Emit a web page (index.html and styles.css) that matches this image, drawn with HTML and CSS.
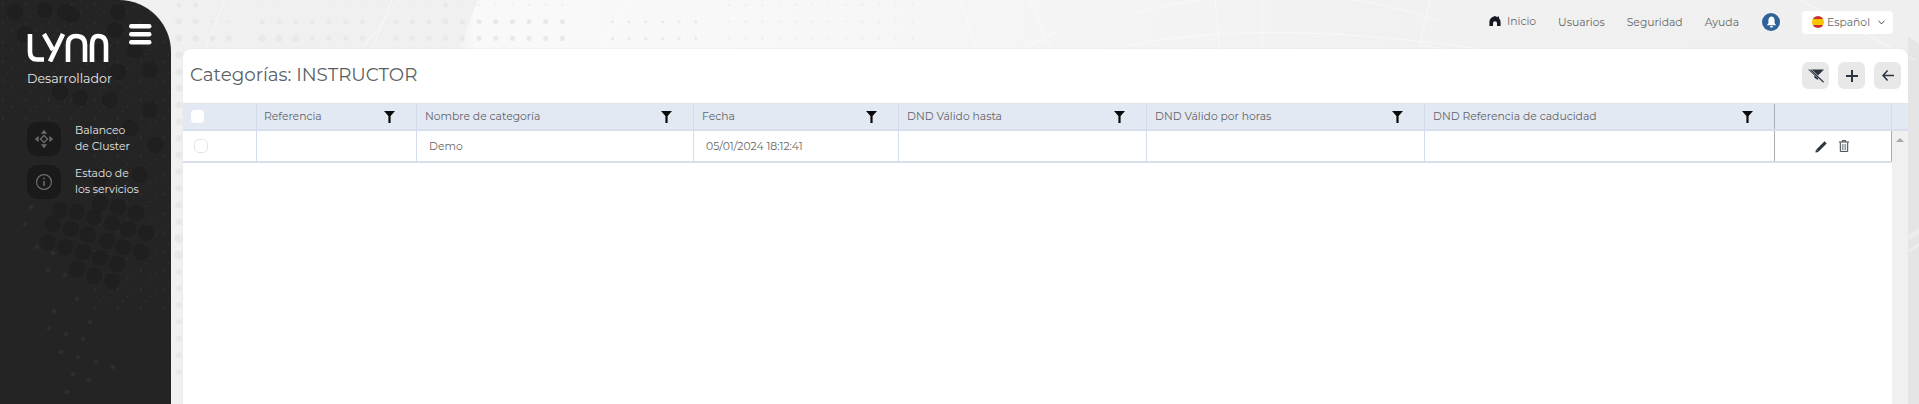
FILE: index.html
```html
<!DOCTYPE html>
<html lang="es">
<head>
<meta charset="utf-8">
<title>Categorías: INSTRUCTOR</title>
<link rel="stylesheet" href="styles.css">
</head>
<body>
<div class="app">
  <svg class="decor" width="1919" height="404" viewBox="0 0 1919 404" aria-hidden="true">
    <defs>
      <pattern id="d10" x="170.67" y="-3.33" width="16.67" height="16.67" patternUnits="userSpaceOnUse"><circle class="dot" cx="8.33" cy="8.33" r="1"/></pattern>
      <pattern id="d15" x="170.67" y="-3.33" width="16.67" height="16.67" patternUnits="userSpaceOnUse"><circle class="dot" cx="8.33" cy="8.33" r="1.5"/></pattern>
      <pattern id="d25" x="170.67" y="-3.33" width="16.67" height="16.67" patternUnits="userSpaceOnUse"><circle class="dot" cx="8.33" cy="8.33" r="2.5"/></pattern>
      <pattern id="d30" x="170.67" y="-3.33" width="16.67" height="16.67" patternUnits="userSpaceOnUse"><circle class="dot" cx="8.33" cy="8.33" r="3"/></pattern>
      <pattern id="d35" x="170.67" y="-3.33" width="16.67" height="16.67" patternUnits="userSpaceOnUse"><circle class="dot" cx="8.33" cy="8.33" r="3.5"/></pattern>
      <pattern id="d45" x="170.67" y="-3.33" width="16.67" height="16.67" patternUnits="userSpaceOnUse"><circle class="dot" cx="8.33" cy="8.33" r="4.5"/></pattern>
    </defs>
    <polygon class="facet-dark" points="171,0 478,0 458,49 171,49"/>
    <polygon class="facet-strip" points="1908,36 1919,44 1919,404 1908,404"/>
    <polygon class="facet-light" points="1908,235 1919,228 1919,234 1908,241"/>
    <polygon class="facet-light" points="1908,250 1919,243 1919,246 1908,253"/>
    <g class="lines">
      <path d="M225 0L205 49M392 0L372 49M400 0L362 49M630 0L600 49M760 0L690 49"/>
      <path d="M960 0L985 72M1030 0L1060 72M1060 30L980 72M1130 14Q1300 -30 1440 22M1125 46Q1300 10 1600 70M1130 70Q1300 45 1480 72"/>
      <path d="M1215 0L1222 72M1262 0V72M1430 0L1420 45L1580 72M1800 0L1915 60"/>
    </g>
    <g>
      <rect fill="url(#d25)" x="171" y="0" width="33" height="13"/>
      <rect fill="url(#d10)" x="255" y="0" width="185" height="13"/>
      <rect fill="url(#d25)" x="440" y="0" width="15" height="13"/>
      <rect fill="url(#d10)" x="455" y="0" width="115" height="13"/>
      <rect fill="url(#d10)" x="725" y="0" width="200" height="13"/>
      <rect fill="url(#d30)" x="171" y="13" width="33" height="17"/>
      <rect fill="url(#d15)" x="204" y="13" width="34" height="17"/>
      <rect fill="url(#d25)" x="255" y="13" width="115" height="17"/>
      <rect fill="url(#d25)" x="390" y="13" width="50" height="17"/>
      <rect fill="url(#d30)" x="440" y="13" width="15" height="17"/>
      <rect fill="url(#d25)" x="455" y="13" width="115" height="17"/>
      <rect fill="url(#d15)" x="605" y="13" width="100" height="17"/>
      <rect fill="url(#d10)" x="725" y="13" width="200" height="17"/>
      <rect fill="url(#d35)" x="171" y="30" width="33" height="16"/>
      <rect fill="url(#d30)" x="204" y="30" width="34" height="16"/>
      <rect fill="url(#d35)" x="255" y="30" width="50" height="16"/>
      <rect fill="url(#d25)" x="305" y="30" width="65" height="16"/>
      <rect fill="url(#d25)" x="390" y="30" width="180" height="16"/>
      <rect fill="url(#d15)" x="605" y="30" width="100" height="16"/>
      <rect fill="url(#d10)" x="725" y="30" width="200" height="16"/>
      <rect fill="url(#d35)" x="171" y="46" width="16" height="184"/>
      <rect fill="url(#d45)" x="171" y="230" width="16" height="32"/>
      <rect fill="url(#d30)" x="171" y="262" width="16" height="118"/>
    </g>
  </svg>
  <aside class="sidebar">
    <svg class="texture" width="171" height="404" viewBox="0 0 171 404" aria-hidden="true">
      <defs>
        <pattern id="grain" width="23" height="19" patternUnits="userSpaceOnUse"><rect class="speck" x="2" y="3" width="1.5" height="3"/><rect class="speck" x="11" y="11" width="2" height="1.5"/><rect class="speck" x="18" y="6" width="1" height="2.5"/><rect class="speck" x="7" y="15" width="1.5" height="1.5"/></pattern>
      </defs>
      <rect fill="url(#grain)" x="0" y="0" width="171" height="120"/>
      <rect fill="url(#grain)" x="90" y="120" width="81" height="190"/>
      <g class="tex-circles">
        <circle cx="15" cy="12" r="8"/><circle cx="45" cy="10" r="8"/><circle cx="72" cy="15" r="8"/><circle cx="25" cy="35" r="8"/><circle cx="118" cy="12" r="8"/><circle cx="65" cy="12" r="8"/><circle cx="115" cy="30" r="8"/><circle cx="100" cy="52" r="8"/><circle cx="135" cy="50" r="8"/><circle cx="118" cy="72" r="8"/><circle cx="150" cy="70" r="8"/><circle cx="60" cy="92" r="8"/><circle cx="80" cy="98" r="8"/><circle cx="110" cy="100" r="8"/><circle cx="150" cy="110" r="8"/><circle cx="130" cy="128" r="8"/><circle cx="155" cy="145" r="8"/><circle cx="140" cy="175" r="8"/><circle cx="100" cy="178" r="8"/>
        <circle cx="60" cy="210" r="8"/><circle cx="77" cy="212" r="8"/><circle cx="94" cy="217" r="8"/><circle cx="112" cy="223" r="8"/><circle cx="53" cy="224" r="8"/><circle cx="71" cy="229" r="8"/><circle cx="88" cy="235" r="8"/><circle cx="107" cy="241" r="8"/><circle cx="123" cy="247" r="8"/><circle cx="141" cy="252" r="8"/><circle cx="48" cy="242" r="8"/><circle cx="65" cy="247" r="8"/><circle cx="83" cy="252" r="8"/><circle cx="100" cy="258" r="8"/><circle cx="117" cy="264" r="8"/><circle cx="77" cy="269" r="8"/><circle cx="94" cy="276" r="8"/><circle cx="112" cy="281" r="8"/><circle cx="100" cy="203" r="8"/><circle cx="118" cy="207" r="8"/><circle cx="136" cy="213" r="8"/><circle cx="128" cy="229" r="8"/><circle cx="146" cy="233" r="8"/>
      </g>
      <g class="tex-diamonds">
        <rect x="29" y="205" width="4" height="4" transform="rotate(30 31 207)"/><rect x="23" y="222" width="4" height="4" transform="rotate(30 25 224)"/><rect x="35" y="245" width="4" height="4" transform="rotate(30 37 247)"/><rect x="51" y="251" width="4" height="4" transform="rotate(30 53 253)"/><rect x="46" y="268" width="4" height="4" transform="rotate(30 48 270)"/><rect x="63" y="273" width="4" height="4" transform="rotate(30 65 275)"/><rect x="75" y="297" width="4" height="4" transform="rotate(30 77 299)"/><rect x="52" y="309" width="4" height="4" transform="rotate(30 54 311)"/><rect x="88" y="320" width="4" height="4" transform="rotate(30 90 322)"/><rect x="47" y="326" width="4" height="4" transform="rotate(30 49 328)"/><rect x="64" y="332" width="4" height="4" transform="rotate(30 66 334)"/><rect x="81" y="337" width="4" height="4" transform="rotate(30 83 339)"/><rect x="59" y="350" width="4" height="4" transform="rotate(30 61 352)"/><rect x="76" y="355" width="4" height="4" transform="rotate(30 78 357)"/><rect x="71" y="372" width="4" height="4" transform="rotate(30 73 374)"/><rect x="87" y="378" width="4" height="4" transform="rotate(30 89 380)"/><rect x="65" y="390" width="4" height="4" transform="rotate(30 67 392)"/><rect x="94" y="360" width="4" height="4" transform="rotate(30 96 362)"/><rect x="111" y="365" width="4" height="4" transform="rotate(30 113 367)"/>
      </g>
    </svg>
    <div class="brand">
      <svg class="logo" width="82" height="29" viewBox="0 0 82 29" aria-label="Lynn"><g fill="none" stroke="#fff" stroke-width="4.6"><path d="M3 1V19Q3 26.5 10 26.5H17"/><path d="M17 1L26 17"/><path d="M36 1L23 28.5"/><path d="M41 29V12Q41 3 49 3Q58 3 58 12V29"/><path d="M65 29V12Q65 3 71 3Q79 3 79 12V29"/></g></svg>
      <svg class="burger" width="23" height="21" viewBox="0 0 23 21"><g fill="#fff"><rect y="0" width="22.5" height="4.6" rx="2.3"/><rect y="8" width="22.5" height="4.6" rx="2.3"/><rect y="16" width="22.5" height="4.6" rx="2.3"/></g></svg>
    </div>
    <div class="role">Desarrollador</div>
    <nav class="side-nav">
      <a class="side-item">
        <span class="side-icon"><svg width="18" height="18" viewBox="0 0 18 18" fill="none" stroke="#6a6a6a" stroke-width="1.3"><rect x="6.5" y="6.5" width="5" height="5" transform="rotate(45 9 9)"/><path d="M9 0.8L7.2 3H10.8ZM9 17.2L7.2 15H10.8ZM0.8 9L3 7.2V10.8ZM17.2 9L15 7.2V10.8Z" fill="#6a6a6a"/></svg></span>
        <span class="side-label">Balanceo<br>de Cluster</span>
      </a>
      <a class="side-item">
        <span class="side-icon"><svg width="18" height="18" viewBox="0 0 18 18" fill="none" stroke="#6e6e6e" stroke-width="1.2"><circle cx="9" cy="9" r="7.4"/><path d="M9 8V13" stroke-width="1.5"/><circle cx="9" cy="5.4" r=".9" fill="#6e6e6e" stroke="none"/></svg></span>
        <span class="side-label">Estado de<br>los servicios</span>
      </a>
    </nav>
  </aside>
  <main class="main">
    <header class="topbar">
      <a class="top-link home"><svg width="12" height="10" viewBox="0 0 12 10"><path d="M6 0L8.5 1.2V.6H10V2.2Q11.6 3.6 11.6 6V10H8V7Q8 5.2 6 5.2Q4 5.2 4 7V10H.4V6Q.4 1.4 6 0Z" fill="#151a22"/></svg>Inicio</a>
      <a class="top-link">Usuarios</a>
      <a class="top-link">Seguridad</a>
      <a class="top-link">Ayuda</a>
      <span class="bell"><svg width="11" height="12" viewBox="0 0 11 12"><path d="M5.5 0.5Q8.6 .8 8.6 4.6V7.2L10.2 9.2H.8L2.4 7.2V4.6Q2.4 .8 5.5 .5Z" fill="#fff"/><rect x="4" y="10" width="3" height="1.6" rx=".8" fill="#fff"/></svg></span>
      <span class="lang"><span class="flag"></span>Español<svg class="chev" width="7" height="5" viewBox="0 0 7 5"><path d="M.5.7L3.5 4L6.5.7" fill="none" stroke="#555" stroke-width="1"/></svg></span>
    </header>
    <section class="card">
      <div class="card-head">
        <h1 class="title">Categorías: INSTRUCTOR</h1>
        <div class="actions">
          <button class="act"><svg width="16" height="14" viewBox="0 0 16 14"><path d="M0 .5H16L10 6.5V11L6.4 8.8V6.5Z" fill="#2b3440"/><path d="M2 .2L16 13.4" stroke="#e8e8e8" stroke-width="2"/><path d="M2.5 .8L15.6 13.2" stroke="#2b3440" stroke-width="1.2"/></svg></button>
          <button class="act"><svg width="12" height="12" viewBox="0 0 12 12"><path d="M6 0V12M0 6H12" stroke="#2b3440" stroke-width="2" fill="none"/></svg></button>
          <button class="act"><svg width="12" height="11" viewBox="0 0 12 11"><path d="M5.6.6L1 5.5L5.6 10.4M1 5.5H12" stroke="#2b3440" stroke-width="1.5" fill="none"/></svg></button>
        </div>
      </div>
      <div class="grid">
        <div class="row head">
          <div class="cell c0"><span class="check solid"></span></div>
          <div class="cell c1">Referencia<svg class="funnel" width="11" height="12" viewBox="0 0 11 12"><path d="M0 0H11L6.6 5V12H4.4V5Z"/></svg></div>
          <div class="cell c2">Nombre de categoría<svg class="funnel" width="11" height="12" viewBox="0 0 11 12"><path d="M0 0H11L6.6 5V12H4.4V5Z"/></svg></div>
          <div class="cell c3">Fecha<svg class="funnel" width="11" height="12" viewBox="0 0 11 12"><path d="M0 0H11L6.6 5V12H4.4V5Z"/></svg></div>
          <div class="cell c4">DND Válido hasta<svg class="funnel" width="11" height="12" viewBox="0 0 11 12"><path d="M0 0H11L6.6 5V12H4.4V5Z"/></svg></div>
          <div class="cell c5">DND Válido por horas<svg class="funnel" width="11" height="12" viewBox="0 0 11 12"><path d="M0 0H11L6.6 5V12H4.4V5Z"/></svg></div>
          <div class="cell c6">DND Referencia de caducidad<svg class="funnel" width="11" height="12" viewBox="0 0 11 12"><path d="M0 0H11L6.6 5V12H4.4V5Z"/></svg></div>
          <div class="cell c7"></div>
          <div class="cell c8"></div>
        </div>
        <div class="body">
          <div class="row data">
            <div class="cell c0"><span class="check"></span></div>
            <div class="cell c1"></div>
            <div class="cell c2 val">Demo</div>
            <div class="cell c3 val">05/01/2024 18:12:41</div>
            <div class="cell c4"></div>
            <div class="cell c5"></div>
            <div class="cell c6"></div>
            <div class="cell c7 tools">
              <svg width="13" height="13" viewBox="0 0 13 13"><path d="M2.4 10.6L10.6 2.4" stroke="#2f3640" stroke-width="3" fill="none"/><path d="M.4 12.6L1 9.4L3.6 12Z" fill="#2f3640"/></svg>
              <svg width="10" height="12" viewBox="0 0 10 12" fill="none" stroke="#3a4048" stroke-width="1"><path d="M0 2H10M3.4 2V.6H6.6V2M1.3 2.4V11.4H8.7V2.4"/><path class="trash-bars" d="M3.4 4V10M5 4V10M6.6 4V10"/></svg>
            </div>
          </div>
          <div class="scrollbar"><span class="arrow"></span></div>
        </div>
      </div>
    </section>
  </main>
</div>
</body>
</html>
```
FILE: styles.css
```css
* { box-sizing: border-box; }
html, body { margin: 0; height: 100%; overflow: hidden; }
body {
  font-family: "Montserrat", Inter, "Open Sans", sans-serif;
  color: #5f6368;
  background: linear-gradient(90deg, #f1f1f1 0, #f1f1f1 460px, #f9f9f9 475px, #f8f8f8 720px, #f5f5f5 1000px, #f1f1f1 1400px, #efefef 100%);
}
.app { position: relative; display: flex; height: 404px; }
.decor { position: absolute; left: 0; top: 0; }
.facet-dark { fill: #f0f0f0; }
.facet-strip { fill: #e5e5e5; }
.facet-light { fill: #ededed; }
.lines { fill: none; stroke: #fff; stroke-width: 1; opacity: .55; }
.dot { fill: #e8e8e8; }
.sidebar {
  position: relative;
  width: 171px;
  flex: none;
  overflow: hidden;
  padding: 24px 0 0 27px;
  color: #e8e8e8;
  background: #242424;
  border-top-right-radius: 52px;
}
.texture { position: absolute; left: 0; top: 0; }
.speck { fill: #2e2e2e; }
.tex-circles { fill: #1f1f1f; }
.tex-diamonds { fill: #2e2e2e; }
.brand, .role, .side-nav { position: relative; }
.brand { display: flex; align-items: flex-start; }
.logo { margin-top: 9px; flex: none; }
.burger { margin-left: 20px; flex: none; }
.role { margin-top: 9px; font-size: 12.6px; line-height: 16px; }
.side-nav { margin-top: 35px; display: flex; flex-direction: column; gap: 9px; }
.side-item { display: flex; align-items: center; gap: 14px; }
.side-icon {
  width: 34px; height: 34px; border-radius: 11px; background: #1a1a1a;
  display: flex; align-items: center; justify-content: center; flex: none;
}
.side-label { font-size: 10.8px; line-height: 16px; color: #e6e6e6; }
.main { position: relative; flex: 1; min-width: 0; padding: 0 11px 0 12px; }
.topbar {
  height: 49px; display: flex; align-items: center; justify-content: flex-end;
  padding: 0 15px 5px 0; font-size: 10.8px; color: #666;
}
.top-link { margin-right: 22px; display: flex; align-items: center; gap: 6px; }
.home { margin-top: -2px; }
.bell {
  width: 18px; height: 18px; border-radius: 50%; background: #2f6299;
  display: flex; align-items: center; justify-content: center; margin-right: 22px; margin-left: 1px;
}
.lang {
  width: 91px; height: 23px; background: #fff; border-radius: 4px;
  display: flex; align-items: center; padding-left: 10px; gap: 3px;
}
.flag {
  width: 12px; height: 12px; border-radius: 50%;
  background: linear-gradient(#c9302c 25%, #f7c400 25%, #f7c400 75%, #c9302c 75%);
}
.chev { margin-left: 5px; }
.card { height: 355px; overflow: hidden; background: #fff; border-radius: 8px 8px 0 0; box-shadow: 0 0 2px #dcdcdc; }
.card-head { height: 54px; display: flex; justify-content: space-between; align-items: flex-start; padding: 14px 7px 0 7px; }
.title { margin: 0; font-size: 18.3px; line-height: 24px; font-weight: 400; color: #5b5f63; }
.actions { display: flex; gap: 9px; margin-top: -1px; }
.act {
  width: 27px; height: 27px; padding: 0; border: 0; border-radius: 6px; background: #e8e8e8;
  display: flex; align-items: center; justify-content: center;
}
.row { display: flex; }
.head { height: 28px; background: #e3e9f3; border-top: 1px solid #dfe4ea; border-bottom: 2px solid #d6dfeb; font-size: 10.8px; color: #5f6368; }
.cell { height: 100%; display: flex; align-items: center; justify-content: space-between; border-right: 1px solid #d2dcea; padding: 0 21px 0 8px; flex: none; }
.c0 { width: 74px; }
.c1 { width: 160px; padding-left: 7px; }
.c2 { width: 277px; }
.c3 { width: 205px; }
.c4 { width: 248px; }
.c5 { width: 278px; }
.c6 { width: 350px; border-right-color: #a9adb2; }
.c7 { width: 117px; }
.data .c7 { border-right-color: #a9adb2; }
.c8 { width: 16px; border: 0; padding: 0; }
.funnel { fill: #0a0a0a; flex: none; }
.check { width: 12.5px; height: 12.5px; border-radius: 4px; background: #fff; display: block; }
.check:not(.solid) { width: 14px; height: 14px; margin-left: 3px; border: 1px solid #e3e5e8; border-radius: 5px; background: #fff; }
.body { display: flex; }
.data { height: 32px; width: 1709px; flex: none; border-bottom: 2px solid #d6dfeb; font-size: 10.8px; color: #666; }
.val { padding-left: 12px; justify-content: flex-start; }
.tools { justify-content: center; gap: 11px; padding: 0 2px 0 0; }
.trash-bars { stroke: #8a8f96; }
.scrollbar { width: 17px; height: 273px; background: #f0f0f0; padding-top: 7px; display: flex; justify-content: center; }
.arrow { width: 0; height: 0; border: 4px solid transparent; border-top: 0; border-bottom: 4px solid #a8a8a8; }
```
